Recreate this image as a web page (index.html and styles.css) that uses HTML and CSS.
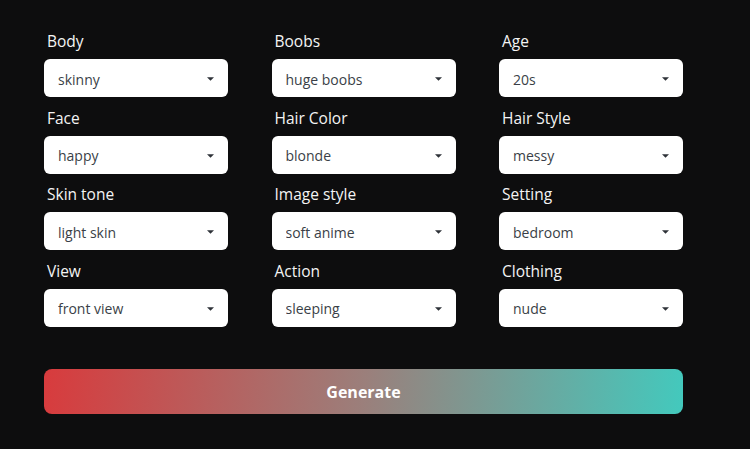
FILE: index.html
```html
<!DOCTYPE html>
<html lang="en">
<head>
<meta charset="UTF-8">
<meta name="viewport" content="width=device-width, initial-scale=1.0">
<title>Generator</title>
<link rel="stylesheet" href="styles.css">
</head>
<body>

<main class="panel">
    <div class="options">
        <div class="field">
            <label for="body">Body</label>
            <div class="select-wrap">
                <select id="body"><option>skinny</option></select>
                <svg class="caret" viewBox="0 0 8 4"><path d="M0 0h8L4 4z"/></svg>
            </div>
        </div>
        <div class="field">
            <label for="boobs">Boobs</label>
            <div class="select-wrap">
                <select id="boobs"><option>huge boobs</option></select>
                <svg class="caret" viewBox="0 0 8 4"><path d="M0 0h8L4 4z"/></svg>
            </div>
        </div>
        <div class="field">
            <label for="age">Age</label>
            <div class="select-wrap">
                <select id="age"><option>20s</option></select>
                <svg class="caret" viewBox="0 0 8 4"><path d="M0 0h8L4 4z"/></svg>
            </div>
        </div>
        <div class="field">
            <label for="face">Face</label>
            <div class="select-wrap">
                <select id="face"><option>happy</option></select>
                <svg class="caret" viewBox="0 0 8 4"><path d="M0 0h8L4 4z"/></svg>
            </div>
        </div>
        <div class="field">
            <label for="hair-color">Hair Color</label>
            <div class="select-wrap">
                <select id="hair-color"><option>blonde</option></select>
                <svg class="caret" viewBox="0 0 8 4"><path d="M0 0h8L4 4z"/></svg>
            </div>
        </div>
        <div class="field">
            <label for="hair-style">Hair Style</label>
            <div class="select-wrap">
                <select id="hair-style"><option>messy</option></select>
                <svg class="caret" viewBox="0 0 8 4"><path d="M0 0h8L4 4z"/></svg>
            </div>
        </div>
        <div class="field">
            <label for="skin">Skin tone</label>
            <div class="select-wrap">
                <select id="skin"><option>light skin</option></select>
                <svg class="caret" viewBox="0 0 8 4"><path d="M0 0h8L4 4z"/></svg>
            </div>
        </div>
        <div class="field">
            <label for="image-style">Image style</label>
            <div class="select-wrap">
                <select id="image-style"><option>soft anime</option></select>
                <svg class="caret" viewBox="0 0 8 4"><path d="M0 0h8L4 4z"/></svg>
            </div>
        </div>
        <div class="field">
            <label for="setting">Setting</label>
            <div class="select-wrap">
                <select id="setting"><option>bedroom</option></select>
                <svg class="caret" viewBox="0 0 8 4"><path d="M0 0h8L4 4z"/></svg>
            </div>
        </div>
        <div class="field">
            <label for="view">View</label>
            <div class="select-wrap">
                <select id="view"><option>front view</option></select>
                <svg class="caret" viewBox="0 0 8 4"><path d="M0 0h8L4 4z"/></svg>
            </div>
        </div>
        <div class="field">
            <label for="action">Action</label>
            <div class="select-wrap">
                <select id="action"><option>sleeping</option></select>
                <svg class="caret" viewBox="0 0 8 4"><path d="M0 0h8L4 4z"/></svg>
            </div>
        </div>
        <div class="field">
            <label for="clothing">Clothing</label>
            <div class="select-wrap">
                <select id="clothing"><option>nude</option></select>
                <svg class="caret" viewBox="0 0 8 4"><path d="M0 0h8L4 4z"/></svg>
            </div>
        </div>
    </div>

    <button class="generate">Generate</button>
</main>

</body>
</html>
```

FILE: styles.css
```css
body, html {
    margin: 0;
    padding: 0;
    background: #0d0d0e;
    font-family: "Open Sans", "Noto Sans", sans-serif;
    height: 100%;
}
.panel {
    width: 639px;
    padding: 31px 0 0 44px;
}
.options {
    display: grid;
    grid-template-columns: repeat(3, 184px);
    column-gap: 43.5px;
    row-gap: 10.67px;
}
.field label {
    display: block;
    color: #f4f4f4;
    font-size: 15.5px;
    line-height: 20px;
    padding-left: 3px;
    margin-bottom: 8px;
}
.select-wrap {
    position: relative;
}
.select-wrap select {
    appearance: none;
    -webkit-appearance: none;
    width: 100%;
    height: 38px;
    border: none;
    border-radius: 6px;
    background: #fff;
    color: #3a3f47;
    font-family: inherit;
    font-size: 14px;
    padding: 2px 14px 0;
    outline: none;
}
.caret {
    position: absolute;
    right: 14px;
    top: 18px;
    width: 7px;
    height: 4px;
    fill: #2e3238;
    pointer-events: none;
}
.generate {
    display: block;
    width: 100%;
    height: 45px;
    margin-top: 42px;
    padding-top: 3px;
    border: none;
    border-radius: 8px;
    background: linear-gradient(95deg, #d83b3d 0%, #9b7f7b 50%, #43c9bd 100%);
    color: #fff;
    font-family: inherit;
    font-size: 16px;
    font-weight: bold;
    cursor: pointer;
}
```
